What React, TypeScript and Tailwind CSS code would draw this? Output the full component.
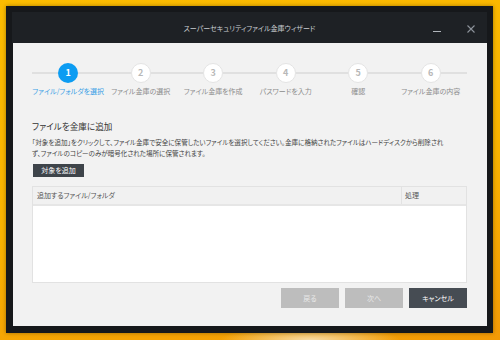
import React from "react";

const FONT = { fontFamily: '"Noto Sans CJK JP", "Noto Sans", sans-serif' };

const steps = [
  "ファイル/フォルダを選択",
  "ファイル金庫の選択",
  "ファイル金庫を作成",
  "パスワードを入力",
  "確認",
  "ファイル金庫の内容",
];

export default function App() {
  return (
    <div
      className="w-[500px] h-[340px] overflow-hidden pt-[6px] pl-[6px] bg-[radial-gradient(ellipse_90px_14px_at_62%_100%,#f7dba6_0%,rgba(247,219,166,0)_100%),linear-gradient(170deg,#fcbc00_0%,#f9b300_55%,#f39a06_100%)]"
      style={FONT}
    >
      <div className="w-[487px] h-[327px] bg-[#16181b] pt-[6px] pl-[6px] pr-[6px] pb-[7px] flex flex-col shadow-[0_0_4px_rgba(0,0,0,0.35)]">
        {/* title bar */}
        <div className="h-[31px] bg-[#1e2125] flex items-center relative">
          <div className="flex-1 text-center text-[7px] text-[#c9cdd2] [font-feature-settings:'palt'] pt-[2px]">
            スーパーセキュリティファイル金庫ウィザード
          </div>
          <div className="absolute left-[421px] top-[19px] w-[8px] h-[1px] bg-[#b0b5bb]" />
          <svg className="absolute left-[455px] top-[13px]" width="8" height="8" viewBox="0 0 8 8">
            <path d="M0.5 0.5 L7.5 7.5 M7.5 0.5 L0.5 7.5" stroke="#8d939b" strokeWidth="1.1" />
          </svg>
        </div>
        {/* content */}
        <div className="flex-1 ml-[1px] bg-[#f2f2f2] pt-[20px] pl-[19px] pr-[20px] flex flex-col [font-feature-settings:'palt']">
          {/* steps */}
          <div className="grid grid-cols-6">
            {steps.map((s, i) => (
              <div key={i} className="flex flex-col items-center">
                <div className="w-full flex items-center">
                  <div className="flex-1 h-[2px] bg-[#e0e0e0]" />
                  {i === 0 ? (
                    <div className="w-[20px] h-[20px] rounded-full bg-[#0c9cf2] text-white text-[9px] font-bold flex items-center justify-center">
                      {i + 1}
                    </div>
                  ) : (
                    <div className="w-[20px] h-[20px] rounded-full bg-white border border-[#e4e4e4] text-[#b8b8b8] text-[9px] font-bold flex items-center justify-center">
                      {i + 1}
                    </div>
                  )}
                  <div className="flex-1 h-[2px] bg-[#e0e0e0]" />
                </div>
                <div
                  className={
                    "mt-[3px] h-[10px] leading-[10px] text-[7px] whitespace-nowrap " +
                    (i === 0 ? "text-[#3a9fe6]" : "text-[#8c8c8c]")
                  }
                >
                  {s}
                </div>
              </div>
            ))}
          </div>

          <div className="mt-[24px] h-[13px] leading-[13px] text-[8.6px] text-[#333333]">
            ファイルを金庫に追加
          </div>
          <div className="mt-[4px] text-[6.55px] leading-[11px] text-[#444444] whitespace-nowrap">
            「対象を追加」をクリックして、ファイル金庫で安全に保管したいファイルを選択してください。金庫に格納されたファイルはハードディスクから削除され
            <br />
            ず、ファイルのコピーのみが暗号化された場所に保管されます。
          </div>
          <div className="mt-[5px] flex">
            <div className="w-[51px] h-[13px] ml-[1px] bg-[#3e444a] text-white text-[7px] leading-[13px] text-center">
              対象を追加
            </div>
          </div>

          {/* table */}
          <div className="mt-[9px] h-[97px] border border-[#e2e2e2] flex flex-col">
            <div className="h-[19px] bg-[#f1f1f1] border-b-[2px] border-[#e6e6e6] flex text-[7px] text-[#555555]">
              <div className="flex-1 pl-[4px] flex items-center">追加するファイル/フォルダ</div>
              <div className="w-[65px] border-l border-[#e2e2e2] pl-[3px] flex items-center">処理</div>
            </div>
            <div className="flex-1 bg-white" />
          </div>

          {/* buttons */}
          <div className="mt-[5px] flex justify-end gap-[6px]">
            <div className="w-[58px] h-[20px] bg-[#bdbdbd] text-[#e9e9e9] text-[7px] flex items-center justify-center">
              戻る
            </div>
            <div className="w-[58px] h-[20px] bg-[#bdbdbd] text-[#e9e9e9] text-[7px] flex items-center justify-center">
              次へ
            </div>
            <div className="w-[58px] h-[20px] bg-[#464c53] text-white text-[7px] flex items-center justify-center">
              キャンセル
            </div>
          </div>
        </div>
      </div>
    </div>
  );
}
